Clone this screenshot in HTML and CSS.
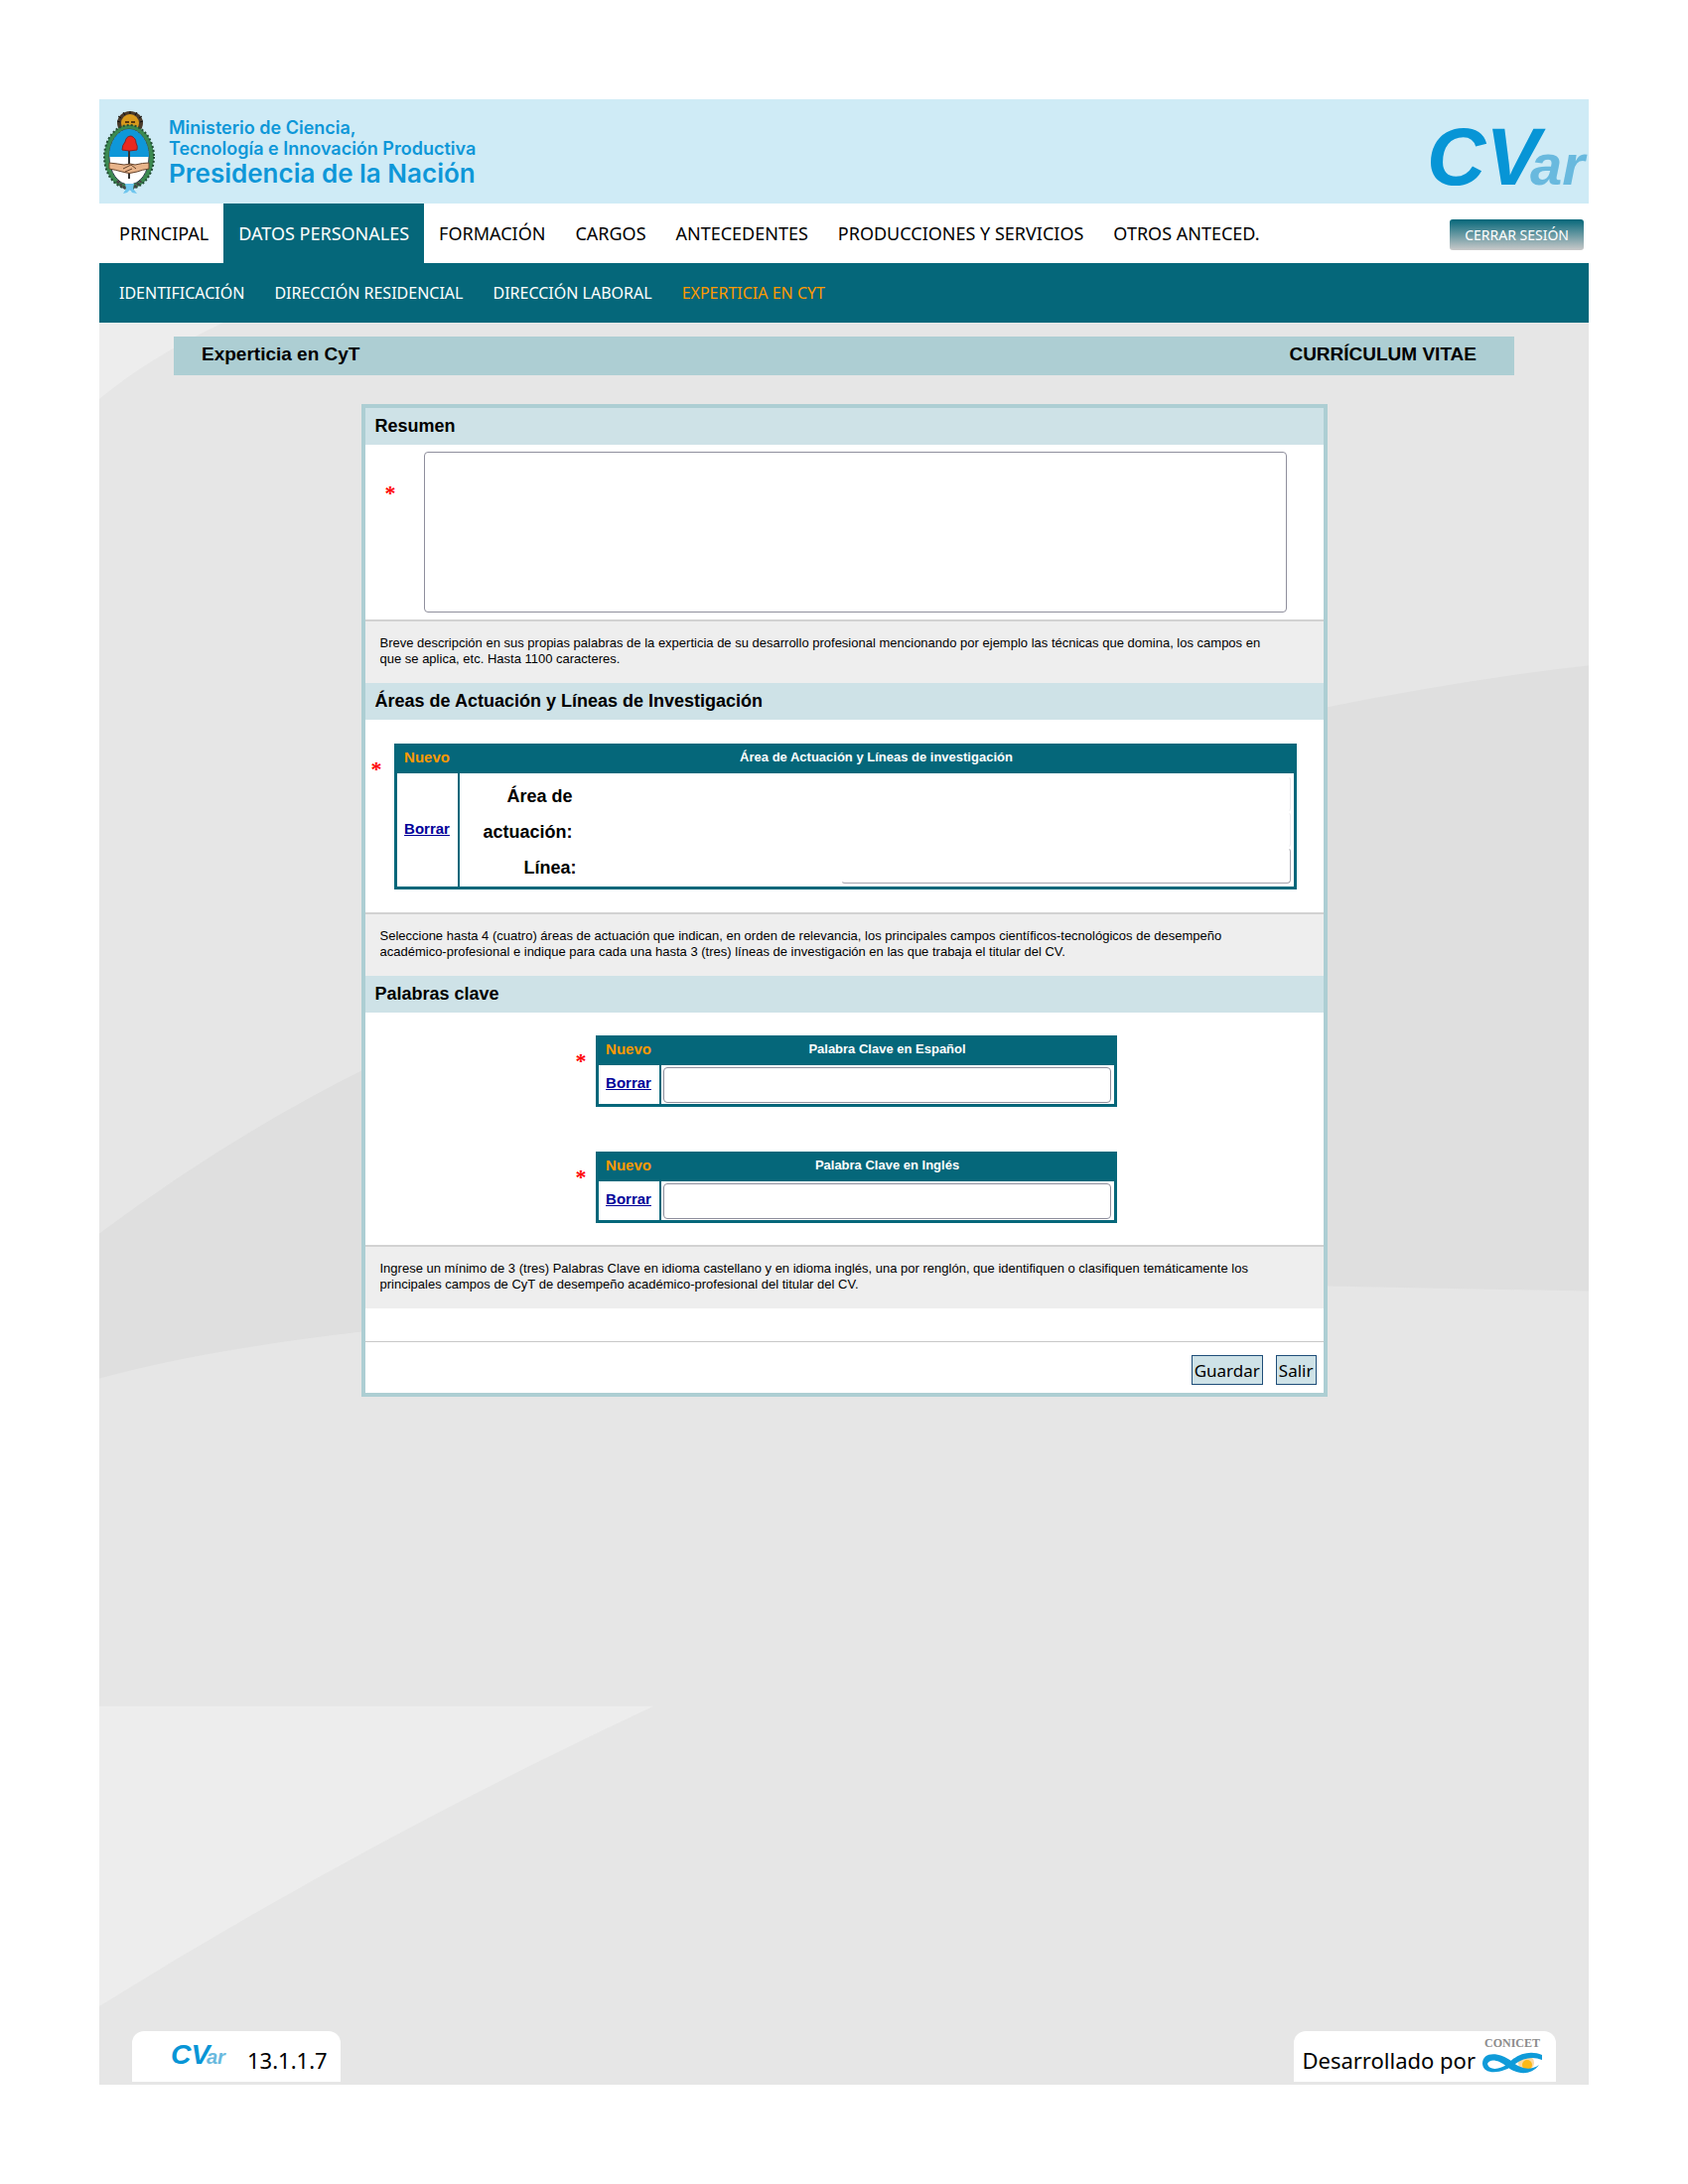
FILE: index.html
```html
<!DOCTYPE html>
<html lang="es">
<head>
<meta charset="utf-8">
<title>CVar - Experticia en CyT</title>
<link rel="stylesheet" href="styles.css">
</head>
<body>
<div class="app">
  <header class="banner">
    <div class="ministry">
      <svg class="crest" viewBox="0 0 53 84" aria-hidden="true">
        <ellipse cx="27" cy="12" rx="13" ry="12" fill="#4a3a2a"/>
        <path d="M14 10l3 1M15 5l3 2M20 1l2 3M27 0v3M34 1l-2 3M39 5l-3 2M40 10l-3 1" stroke="#111" stroke-width="1"/>
        <circle cx="27" cy="12" r="9" fill="#d99a1c"/>
        <path d="M22 11h4M28 11h4M24 15h6" stroke="#5a3a10" stroke-width="2"/>
        <ellipse cx="26" cy="46" rx="25" ry="32" fill="#3b8a50"/>
        <ellipse cx="26" cy="46" rx="25" ry="32" fill="none" stroke="#234d35" stroke-width="2" stroke-dasharray="2 2"/>
        <ellipse cx="26" cy="46" rx="20" ry="28" fill="#fff" stroke="#345" stroke-width="1"/>
        <path d="M6 46a20 28 0 0 1 40 0z" fill="#0e97d8"/>
        <path d="M26 38v30" stroke="#333" stroke-width="2"/>
        <path d="M19 39q0-5 3-8 1-6 6-6 5 2 5 7 2 3 1 7-8 2-15 0z" fill="#e8281f" stroke="#8a2020" stroke-width="1"/>
        <path d="M6 52q9 1 15 2 7-2 11 0 8-2 14-2v6q-7 1-12 3-8 3-15 0-7-2-13-3z" fill="#e8b48a" stroke="#66442c" stroke-width="1"/>
        <path d="M20 58l8-4 5 4M22 61l7-3" fill="none" stroke="#66442c" stroke-width="1"/>
        <path d="M14 70q6 8 12 8t12-8" fill="none" stroke="#444" stroke-width="3" stroke-dasharray="3 1"/>
        <path d="M22 73h9l-1 5 4 5-5-1-2-3-3 3-4 1 3-5z" fill="#6fc6ee"/>
      </svg>
      <div class="ministry-name">
        <span>Ministerio de Ciencia,</span>
        <span>Tecnología e Innovación Productiva</span>
        <strong>Presidencia de la Nación</strong>
      </div>
    </div>
    <svg class="cvar-logo" viewBox="0 0 156 84" role="img" aria-label="CVar">
      <g id="cvar">
        <text class="cvar-cv" x="-3" y="74">CV<tspan class="cvar-ar" dx="-10">ar</tspan></text>
      </g>
    </svg>
  </header>

  <nav class="main-nav" aria-label="Principal">
    <ul>
      <li><a href="#">PRINCIPAL</a></li>
      <li><a href="#" class="current">DATOS PERSONALES</a></li>
      <li><a href="#">FORMACIÓN</a></li>
      <li><a href="#">CARGOS</a></li>
      <li><a href="#">ANTECEDENTES</a></li>
      <li><a href="#">PRODUCCIONES Y SERVICIOS</a></li>
      <li><a href="#">OTROS ANTECED.</a></li>
    </ul>
    <button type="button" class="logout">CERRAR SESIÓN</button>
  </nav>
  <nav class="sub-nav" aria-label="Datos personales">
    <ul>
      <li><a href="#">IDENTIFICACIÓN</a></li>
      <li><a href="#">DIRECCIÓN RESIDENCIAL</a></li>
      <li><a href="#">DIRECCIÓN LABORAL</a></li>
      <li><a href="#" class="current">EXPERTICIA EN CYT</a></li>
    </ul>
  </nav>

  <main class="content">
    <svg class="backdrop" viewBox="0 0 1500 1774" preserveAspectRatio="none" aria-hidden="true">
      <path fill="#ededed" d="M0 0H125Q50 35 0 77Z"/>
      <path fill="#dfdfdf" d="M0 917Q130 820 264 753C600 580 900 430 1237 387Q1370 360 1500 345V975L1237 970Q700 960 264 1016Q100 1035 0 1063Z"/>
      <path fill="#ededed" d="M0 1393H558Q265 1530 0 1695Z"/>
    </svg>

    <div class="title-bar">
      <h1>Experticia en CyT</h1>
      <span>CURRÍCULUM VITAE</span>
    </div>

    <form class="panel">
      <h2 id="resumen-title">Resumen</h2>
      <div class="row summary">
        <span class="required">*</span>
        <textarea aria-labelledby="resumen-title"></textarea>
      </div>
      <p class="note">Breve descripción en sus propias palabras de la experticia de su desarrollo profesional mencionando por ejemplo las técnicas que domina, los campos en que se aplica, etc. Hasta 1100 caracteres.</p>

      <h2>Áreas de Actuación y Líneas de Investigación</h2>
      <div class="row areas">
        <span class="required">*</span>
        <table class="items">
          <tr>
            <th class="action"><a href="#">Nuevo</a></th>
            <th>Área de Actuación y Líneas de investigación</th>
          </tr>
          <tr>
            <td class="action"><a href="#">Borrar</a></td>
            <td>
              <div class="area-fields">
                <label class="area-label" for="area">Área de actuación:</label>
                <div class="area-inputs">
                  <input class="faded" type="text" id="area">
                  <input class="faded" type="text" aria-label="Área de actuación, detalle">
                </div>
                <label for="linea">Línea:</label>
                <div class="line-field"><input class="faded" type="text" id="linea"></div>
              </div>
            </td>
          </tr>
        </table>
      </div>
      <p class="note">Seleccione hasta 4 (cuatro) áreas de actuación que indican, en orden de relevancia, los principales campos científicos-tecnológicos de desempeño académico-profesional e indique para cada una hasta 3 (tres) líneas de investigación en las que trabaja el titular del CV.</p>

      <h2>Palabras clave</h2>
      <div class="keywords">
        <div class="row keyword">
          <span class="required">*</span>
          <table class="items">
            <tr>
              <th class="action"><a href="#">Nuevo</a></th>
              <th id="kw-es">Palabra Clave en Español</th>
            </tr>
            <tr>
              <td class="action"><a href="#">Borrar</a></td>
              <td class="field"><input type="text" aria-labelledby="kw-es"></td>
            </tr>
          </table>
        </div>
        <div class="row keyword">
          <span class="required">*</span>
          <table class="items">
            <tr>
              <th class="action"><a href="#">Nuevo</a></th>
              <th id="kw-en">Palabra Clave en Inglés</th>
            </tr>
            <tr>
              <td class="action"><a href="#">Borrar</a></td>
              <td class="field"><input type="text" aria-labelledby="kw-en"></td>
            </tr>
          </table>
        </div>
      </div>
      <p class="note">Ingrese un mínimo de 3 (tres) Palabras Clave en idioma castellano y en idioma inglés, una por renglón, que identifiquen o clasifiquen temáticamente los principales campos de CyT de desempeño académico-profesional del titular del CV.</p>

      <div class="actions">
        <button type="submit">Guardar</button>
        <button type="button">Salir</button>
      </div>
    </form>

    <footer class="footer">
      <div class="badge version">
        <svg class="cvar-small" viewBox="0 0 156 84" role="img" aria-label="CVar"><use href="#cvar"/></svg>
        <span>13.1.1.7</span>
      </div>
      <div class="badge developer">
        <span>Desarrollado por</span>
        <svg class="conicet" viewBox="0 0 62 40" role="img" aria-label="CONICET">
          <text x="31" y="12" text-anchor="middle">CONICET</text>
          <g transform="translate(0 4)">
            <circle cx="45" cy="24" r="8" fill="#fcd9a0"/>
            <circle cx="46" cy="26" r="5" fill="#fbb917"/>
            <path d="M1 25C1 12 18 13 30 22 38 29 48 33 58 26 50 37 36 36 26 28 16 20 8 20 6 25 8 32 18 31 27 25 36 14 50 11 61 16V21C52 17 42 19 34 25 22 35 2 37 1 25Z" fill="#0f9bd9"/>
          </g>
        </svg>
      </div>
    </footer>
  </main>
</div>
</body>
</html>
```
FILE: styles.css
```css
* { box-sizing: border-box; }

body {
  margin: 0;
  padding: 100px;
  background: #fff;
  color: #000;
  font-family: "Noto Sans", sans-serif;
}

.app {
  display: flex;
  flex-direction: column;
  min-height: calc(100vh - 200px);
}

/* Banner */
.banner {
  display: flex;
  justify-content: space-between;
  height: 105px;
  padding: 12px 4px;
  background: #cfebf6;
}
.ministry { display: flex; gap: 13px; }
.crest { width: 53px; height: 84px; }
.ministry-name {
  display: flex;
  flex-direction: column;
  padding-top: 6px;
  color: #0e97d8;
  font: 600 18px/21px Inter, sans-serif;
}
.ministry-name strong { font: 600 26px/30px Inter, sans-serif; }
.cvar-logo { width: 156px; height: 84px; overflow: visible; }
.cvar-cv { font: italic bold 82px "Liberation Sans Narrow", "Liberation Sans", sans-serif; fill: #0795d6; }
.cvar-ar { font-size: 58px; fill: #69b9de; }

/* Navigation */
.main-nav, .sub-nav {
  display: flex;
  align-items: center;
  justify-content: space-between;
  padding: 0 5px;
}
.main-nav ul, .sub-nav ul { display: flex; margin: 0; padding: 0; list-style: none; }
.main-nav a, .sub-nav a {
  display: block;
  padding: 0 15px;
  line-height: 60px;
  text-decoration: none;
}
.main-nav a { color: #000; font-size: 18px; }
.main-nav .current { background: #05677a; color: #fff; }
.sub-nav { background: #05677a; }
.sub-nav a { color: #fff; font-size: 16px; }
.sub-nav .current { color: #f90; }
.logout {
  height: 31px;
  margin-top: 2px;
  padding: 0 15px;
  border: 0;
  border-radius: 3px;
  background: linear-gradient(#05677a, #c9c9c9);
  color: #fff;
  font: 14px "Noto Sans", sans-serif;
}

/* Page body */
.content {
  position: relative;
  z-index: 0;
  display: flex;
  flex: 1;
  flex-direction: column;
  align-items: center;
  background: #e6e6e6;
  font-family: "Liberation Sans", sans-serif;
}
.backdrop { position: absolute; inset: 0; z-index: -1; width: 100%; height: 100%; }

.title-bar {
  display: flex;
  align-items: center;
  justify-content: space-between;
  width: 90%;
  height: 39px;
  margin: 14px 0 29px;
  padding: 0 38px 4px 28px;
  background: #adced3;
  font-size: 19px;
  font-weight: bold;
}
.title-bar h1 { margin: 0; font-size: inherit; }

.panel {
  width: 100%;
  max-width: 973px;
  border: 4px solid #adced3;
  background: #fff;
}
.panel h2 {
  height: 37px;
  margin: 0;
  padding: 0 10px;
  background: #cee2e7;
  font-size: 18px;
  line-height: 36px;
}
.row { display: flex; align-items: flex-start; }
.required {
  flex: none;
  color: #f00;
  font: bold 22px/20px "Liberation Serif", serif;
}
.note {
  margin: 0;
  padding: 14px 45px 16px 15px;
  border-top: 2px solid #d2d2d2;
  background: #eee;
  font-size: 13px;
  line-height: 16px;
}

textarea, input {
  border: 1px solid #8f8f9d;
  border-radius: 4px;
  background: #fff;
  font: 16px "Liberation Sans", sans-serif;
}

.summary { padding: 7px 37px 7px 20px; }
.summary .required { width: 39px; padding-top: 32px; }
.summary textarea { flex: 1; height: 162px; resize: none; }

.areas { padding: 24px 27px 23px 6px; }
.areas .required { width: 23px; padding-top: 16px; }

.items {
  flex: 1;
  border: 1px solid #05677a;
  border-spacing: 2px;
  background: #05677a;
}
.items th, .items td { padding: 0; }
.items th {
  height: 25px;
  padding-top: 2px;
  color: #fff;
  font-size: 13px;
  line-height: 18px;
  vertical-align: top;
}
.items td { background: #fff; }
.items .action { width: 61px; font-size: 15px; font-weight: bold; text-align: center; }
.items td.action { padding-bottom: 4px; }
.items th a { color: #f90; text-decoration: none; }
.items td a { color: #009; }

.area-fields {
  display: grid;
  grid-template-columns: 115px 1fr;
  padding: 3px;
  font-size: 18px;
  font-weight: bold;
  line-height: 36px;
  text-align: right;
}
.area-fields label { padding-top: 2px; margin-bottom: -2px; }
.area-fields .area-label { padding-right: 4px; }
.area-inputs { display: flex; flex-direction: column; }
.faded { height: 36px; border-color: transparent #e8e8ec transparent transparent; }
.line-field { display: flex; padding-left: 37%; }
.line-field .faded { flex: 1; border-right-color: #a4a4ae; border-bottom-color: #a4a4ae; }

.keywords {
  display: flex;
  flex-direction: column;
  gap: 45px;
  align-items: center;
  padding: 23px 0 22px 4px;
}
.keyword { width: 545px; }
.keyword .required { width: 20px; padding-top: 16px; }
.items .field { padding: 2px 3px 1px 2px; }
.field input { display: block; width: 100%; height: 36px; }

.actions {
  display: flex;
  justify-content: flex-end;
  gap: 13px;
  margin-top: 33px;
  padding: 13px 7px 8px;
  border-top: 1px solid #c8c8c8;
}
.actions button {
  height: 30px;
  padding: 0 2px;
  border: 1px solid #1f4e79;
  background: #cee2e7;
  color: #000;
  font: 17px "Noto Sans", sans-serif;
}

/* Footer */
.footer {
  display: flex;
  justify-content: space-between;
  width: 100%;
  margin-top: auto;
  padding: 0 33px 3px;
  font-family: "Noto Sans", sans-serif;
  font-size: 22px;
}
.badge {
  display: flex;
  height: 51px;
  border-radius: 12px 12px 0 0;
  background: #fff;
  line-height: 58px;
}
.version { gap: 22px; padding: 0 13px 0 40px; }
.developer { gap: 6px; padding: 0 13px 0 8px; }
.cvar-small { width: 54px; height: 30px; margin-top: 7px; overflow: visible; }
.conicet { width: 62px; height: 40px; margin-top: 4px; }
.conicet text { font: bold 12px "Liberation Serif", serif; fill: #8c8c8c; }
```
